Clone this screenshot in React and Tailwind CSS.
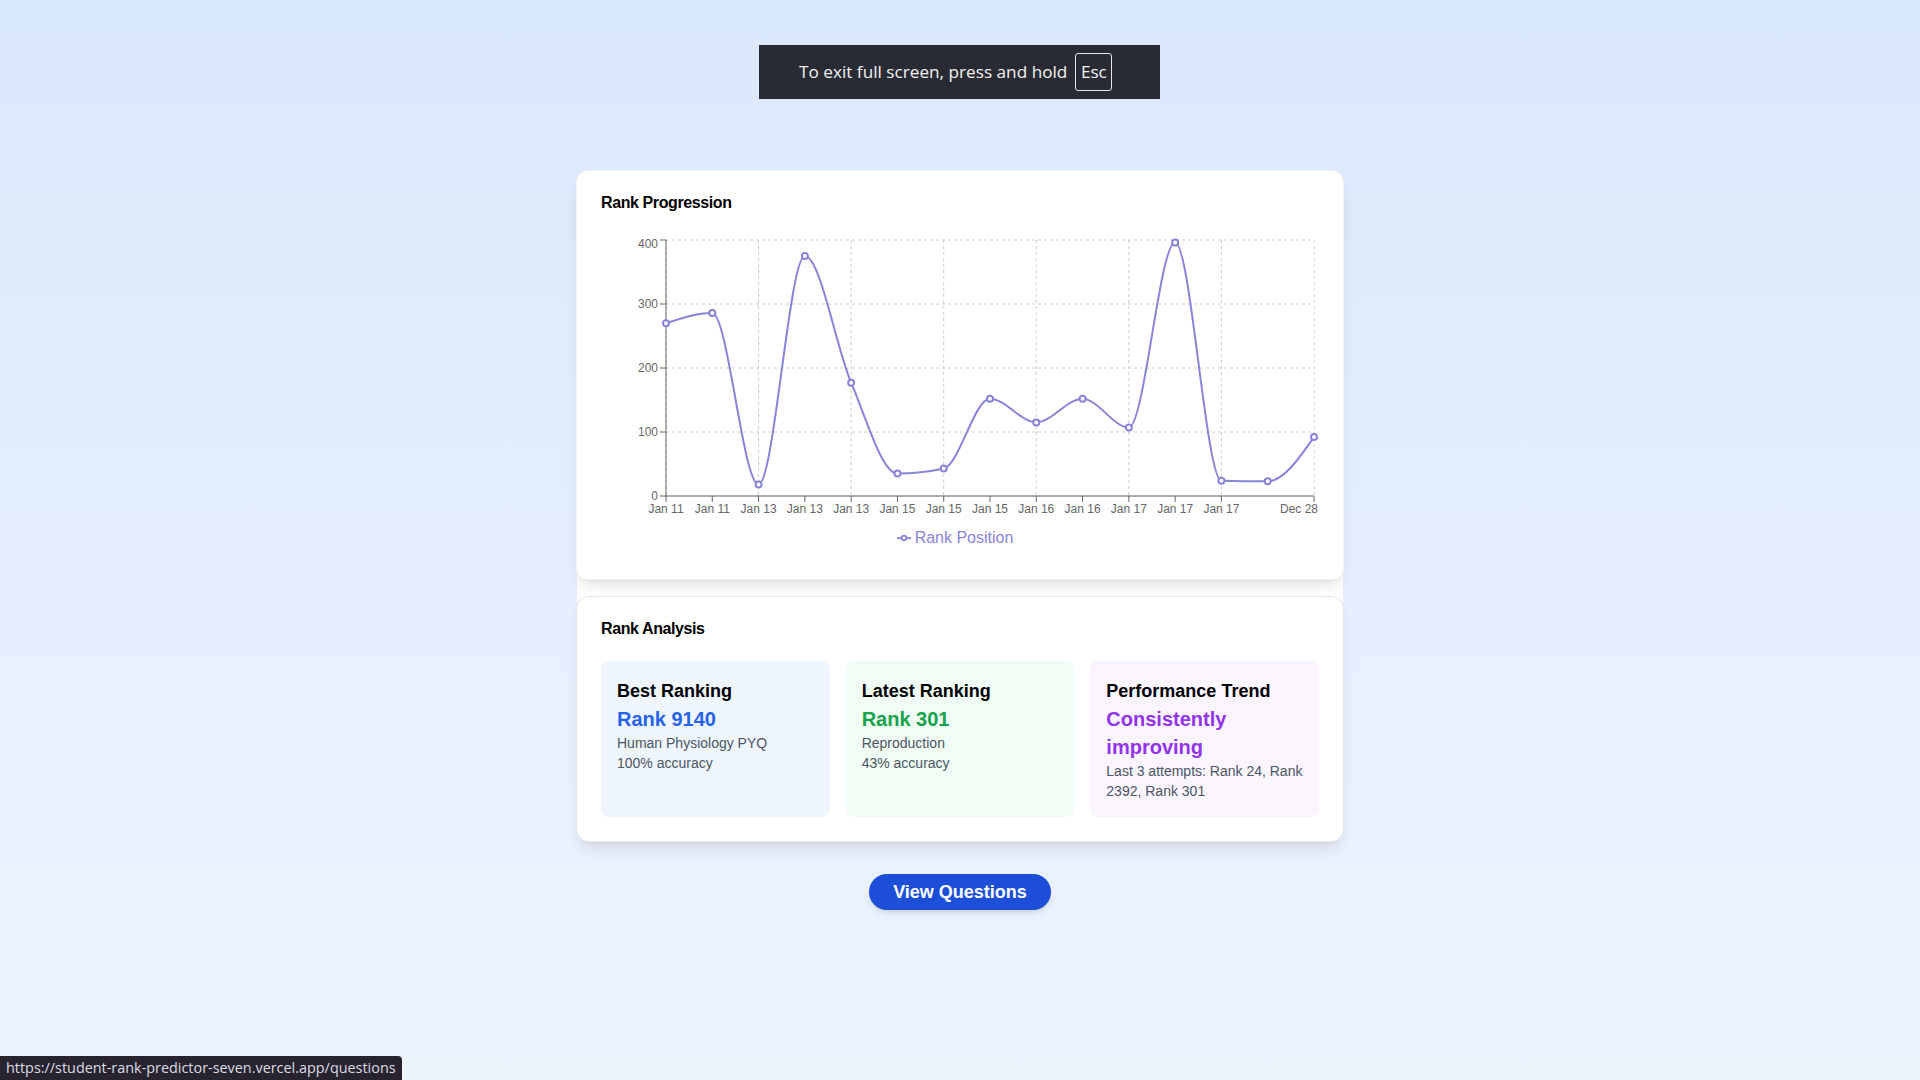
import React from "react";

const ranks = [270, 286, 18, 375, 177, 35, 43, 152, 115, 152, 107, 396, 24, 23, 92];
const labels = [
  "Jan 11", "Jan 11", "Jan 13", "Jan 13", "Jan 13", "Jan 15", "Jan 15", "Jan 15",
  "Jan 16", "Jan 16", "Jan 17", "Jan 17", "Jan 17", "", "Dec 28",
];

const W = 718;
const H = 291;
const LEFT = 65;
const RIGHT = 713;
const TOP = 5;
const BOTTOM = 261;
const COLOR = "#8884d8";

const xAt = (i) => LEFT + (i * (RIGHT - LEFT)) / (ranks.length - 1);
const yAt = (v) => BOTTOM - (v * (BOTTOM - TOP)) / 400;

// same maths as d3 curveMonotoneX
const sign = (x) => (x < 0 ? -1 : 1);
const slope3 = (a, b, c) => {
  const h0 = b[0] - a[0];
  const h1 = c[0] - b[0];
  const s0 = (b[1] - a[1]) / h0;
  const s1 = (c[1] - b[1]) / h1;
  const p = (s0 * h1 + s1 * h0) / (h0 + h1);
  return (sign(s0) + sign(s1)) * Math.min(Math.abs(s0), Math.abs(s1), 0.5 * Math.abs(p)) || 0;
};
const slope2 = (a, b, t) => {
  const h = b[0] - a[0];
  return h ? (3 * (b[1] - a[1])) / h / 2 - t / 2 : t;
};

const monotonePath = (pts) => {
  const n = pts.length;
  const t = new Array(n);
  for (let i = 1; i < n - 1; i++) t[i] = slope3(pts[i - 1], pts[i], pts[i + 1]);
  t[0] = slope2(pts[0], pts[1], t[1]);
  t[n - 1] = slope2(pts[n - 2], pts[n - 1], t[n - 2]);
  let d = `M${pts[0][0]},${pts[0][1]}`;
  for (let i = 0; i < n - 1; i++) {
    const [x0, y0] = pts[i];
    const [x1, y1] = pts[i + 1];
    const dx = (x1 - x0) / 3;
    d += `C${x0 + dx},${y0 + dx * t[i]},${x1 - dx},${y1 - dx * t[i + 1]},${x1},${y1}`;
  }
  return d;
};

const tickFont = "'Liberation Sans', Arial, sans-serif";

const RankChart = () => {
  const pts = ranks.map((v, i) => [xAt(i), yAt(v)]);
  const yTicks = [0, 100, 200, 300, 400];
  const last = labels.length - 1;

  return (
    <div className="w-[718px] h-[320px] flex flex-col">
      <svg width={W} height={H} className="block overflow-visible">
        {/* grid */}
        <g stroke="#ccc" strokeDasharray="3 3" fill="none">
          {yTicks.map((v) => (
            <line key={v} x1={LEFT} x2={RIGHT} y1={yAt(v)} y2={yAt(v)} />
          ))}
          {ranks.map((_, i) =>
            i % 2 === 0 ? <line key={i} x1={xAt(i)} x2={xAt(i)} y1={TOP} y2={BOTTOM} /> : null
          )}
        </g>

        {/* y axis */}
        <line x1={LEFT} x2={LEFT} y1={TOP} y2={BOTTOM} stroke="#666" />
        {yTicks.map((v) => (
          <g key={v}>
            <line x1={LEFT - 6} x2={LEFT} y1={yAt(v)} y2={yAt(v)} stroke="#666" />
            <text
              x={LEFT - 8}
              y={v === 400 ? yAt(v) + 4 : yAt(v)}
              dy="0.355em"
              textAnchor="end"
              fill="#666"
              fontSize="12"
              fontFamily={tickFont}
            >
              {v}
            </text>
          </g>
        ))}

        {/* x axis */}
        <line x1={LEFT} x2={RIGHT} y1={BOTTOM} y2={BOTTOM} stroke="#666" />
        {labels.map((l, i) =>
          l ? (
            <g key={i}>
              <line x1={xAt(i)} x2={xAt(i)} y1={BOTTOM} y2={BOTTOM + 6} stroke="#666" />
              <text
                x={i === last ? W - 1 : xAt(i)}
                y={BOTTOM + 8}
                dy="0.71em"
                textAnchor={i === last ? "end" : "middle"}
                fill="#666"
                fontSize="12"
                fontFamily={tickFont}
              >
                {l}
              </text>
            </g>
          ) : null
        )}

        {/* line + dots */}
        <path d={monotonePath(pts)} fill="none" stroke={COLOR} strokeWidth="2" />
        {pts.map(([x, y], i) => (
          <circle key={i} cx={x} cy={y} r="3" fill="#fff" stroke={COLOR} strokeWidth="2" />
        ))}
      </svg>

      {/* legend */}
      <div className="h-[24px] flex items-center justify-center">
        <div className="flex items-center mr-[10px]">
          <svg width="14" height="14" viewBox="0 0 32 32" className="mr-1">
            <path
              strokeWidth="4"
              fill="none"
              stroke={COLOR}
              d="M0,16h10.666666666666666 A5.333333333333333,5.333333333333333,0,1,1,21.333333333333332,16 H32M21.333333333333332,16 A5.333333333333333,5.333333333333333,0,1,1,10.666666666666666,16"
            />
          </svg>
          <span className="text-base text-[#8884d8]">Rank Position</span>
        </div>
      </div>
    </div>
  );
};

const StatBox = ({ bg, title, value, valueColor, lines }) => (
  <div className={`${bg} rounded-lg p-4`}>
    <h3 className="text-lg font-semibold text-black">{title}</h3>
    <p className={`text-xl font-bold ${valueColor}`}>{value}</p>
    {lines.map((l, i) => (
      <p key={i} className="text-sm text-[#4b5563]">
        {l}
      </p>
    ))}
  </div>
);

const App = () => {
  return (
    <div className="min-h-screen bg-linear-to-b from-[#dae8fc] to-[#eef4fe] font-['Liberation_Sans',Arial,sans-serif] pt-[171px] pb-20 flex flex-col items-center">
      <div className="w-[766px] bg-white rounded-xl flex flex-col gap-[18px]">
        {/* Rank Progression */}
        <div className="bg-white rounded-xl shadow-lg ring-1 ring-gray-100 p-6">
          <h2 className="text-base font-semibold leading-none tracking-tight text-black">
            Rank Progression
          </h2>
          <div className="mt-6">
            <RankChart />
          </div>
        </div>

        {/* Rank Analysis */}
        <div className="bg-white rounded-xl shadow-lg ring-1 ring-gray-200 p-6">
          <h2 className="text-base font-semibold leading-none tracking-tight text-black">
            Rank Analysis
          </h2>
          <div className="mt-6 grid grid-cols-3 gap-4">
            <StatBox
              bg="bg-[#eff6ff]"
              title="Best Ranking"
              value="Rank 9140"
              valueColor="text-[#2563eb]"
              lines={["Human Physiology PYQ", "100% accuracy"]}
            />
            <StatBox
              bg="bg-[#f0fdf4]"
              title="Latest Ranking"
              value="Rank 301"
              valueColor="text-[#16a34a]"
              lines={["Reproduction", "43% accuracy"]}
            />
            <StatBox
              bg="bg-[#faf5ff]"
              title="Performance Trend"
              value="Consistently improving"
              valueColor="text-[#9333ea]"
              lines={["Last 3 attempts: Rank 24, Rank 2392, Rank 301"]}
            />
          </div>
        </div>
      </div>

      <button className="mt-[33px] px-6 py-1 rounded-full bg-[#1d4ed8] text-white text-lg font-semibold shadow-md">
        View Questions
      </button>

      {/* fullscreen notice */}
      <div className="fixed top-[45px] left-[759px] w-[401px] h-[54px] bg-[#292b34] flex items-center pl-10 font-['Open_Sans',sans-serif] text-[#f2f2f2]">
        <span className="text-[17.2px]">To exit full screen, press and hold</span>
        <span className="ml-2 w-[37px] h-[38px] border border-[#e6e6e6] rounded-[3px] flex items-center justify-center text-[17.2px]">
          Esc
        </span>
      </div>

      {/* link preview */}
      <div className="fixed bottom-0 left-0 h-[24px] w-[402px] bg-[#27232f] rounded-tr-[4px] flex items-center pl-[6px] font-['Open_Sans',sans-serif] text-[14.4px] text-[#dcdce4] whitespace-nowrap">
        https://student-rank-predictor-seven.vercel.app/questions
      </div>
    </div>
  );
};

export default App;
